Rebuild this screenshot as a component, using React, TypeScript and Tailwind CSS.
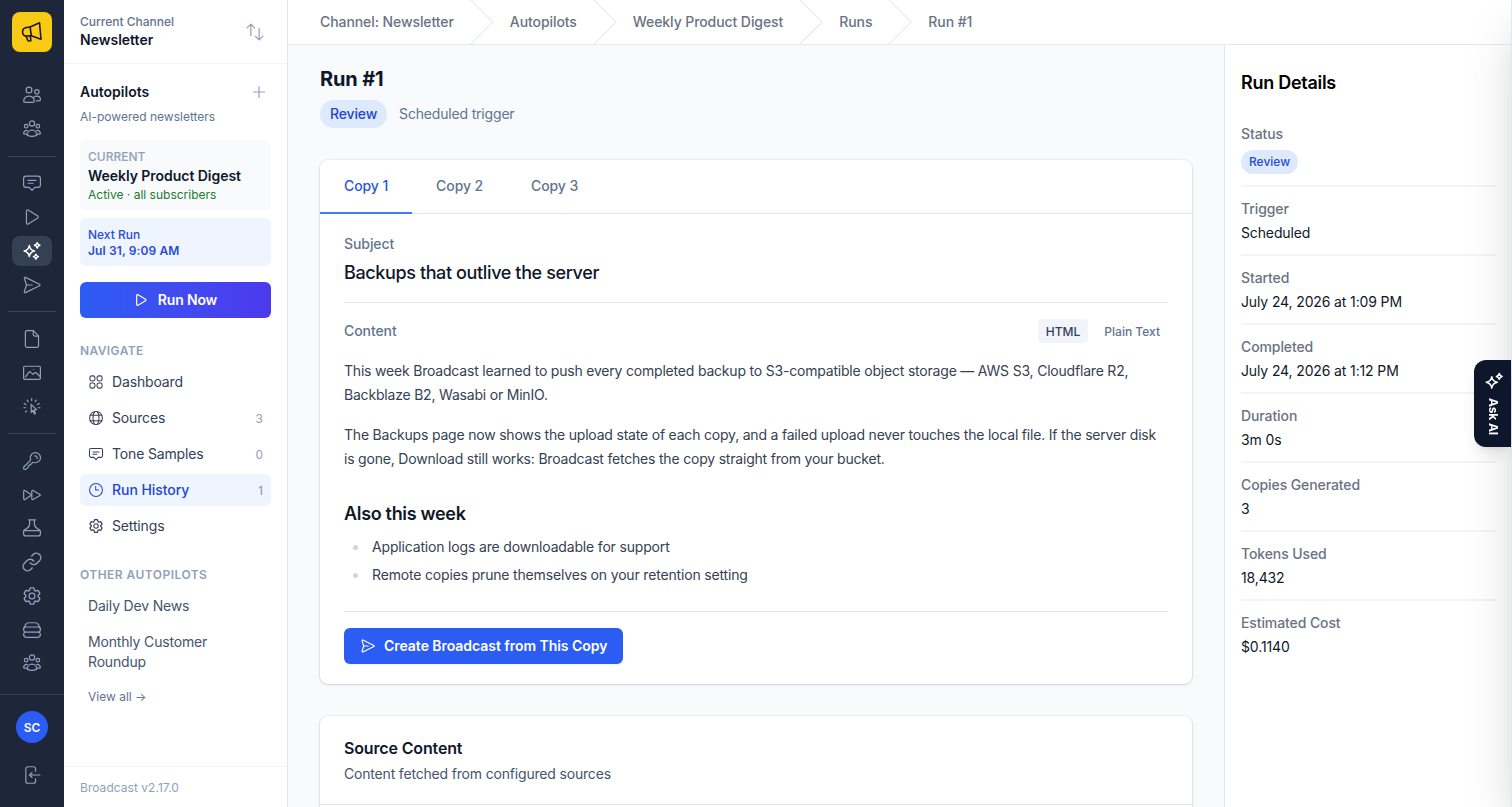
import React from 'react';
import clsx from 'clsx';

const icons = {
  megaphone: (
    <>
      <path d="M9.8 6.1 21 .9l1.8 19.8-11.7-4.3z" />
      <path d="m9.800 6.100-4.500.6C2.200 7.200.5 9.600.7 12.400c.3 3 2.500 4.900 5.400 4.500l5-.5" />
      <path d="m5 17 2 5c.2.6.7.8 1.200.8l2.500-.4-.8-5.700" />
    </>
  ),
  users: (
    <>
      <circle cx="8" cy="5.4" r="3.9" />
      <circle cx="18.5" cy="7.800" r="2.9" />
      <path d="M.9 20.2c0-3.9 3.2-6.8 7.1-6.8s7.1 2.9 7.1 6.8c0 .7-.4 1.200-1 1.300-4 .6-8.200.6-12.200 0-.6-.1-1-.6-1-1.300Z" />
      <path d="M14.4 14.7c1.200-.9 2.600-1.300 4.100-1.300 2.700 0 4.800 2.100 4.800 4.900 0 .6-.4 1.100-.9 1.200-1.500.3-3 .4-4.600.4" />
    </>
  ),
  group: (
    <>
      <circle cx="12" cy="4.6" r="3.5" />
      <circle cx="4.2" cy="8.2" r="2.4" />
      <circle cx="19.8" cy="8.2" r="2.4" />
      <path d="M5.6 20.2c0-3.7 2.8-6.6 6.4-6.6s6.4 2.9 6.4 6.6c-4 2.1-8.800 2.100-12.800 0Z" />
      <path d="M6.200 14.300C3.400 13.200.9 15 .8 18.300c1 .5 2.600.7 4.800.5M17.800 14.300c2.800-1.100 5.300.7 5.400 4-1 .5-2.600.7-4.800.5" />
    </>
  ),
  chat: (
    <>
      <path d="M3.8 2.7h16.4c1.7 0 3 1.3 3 3v9.100c0 1.700-1.300 3-3 3h-4.400L12 21.700l-3.800-3.900H3.800c-1.700 0-3-1.300-3-3V5.700c0-1.700 1.300-3 3-3Z" />
      <path d="M6.700 8.500h10.600M6.700 12.300h6.800" />
    </>
  ),
  play: <path d="M4.6 4.1v15.800c0 1.200 1.300 1.900 2.300 1.300l12.800-7.900c1-.6 1-2 0-2.600L6.900 2.800C5.900 2.200 4.600 2.900 4.600 4.100Z" />,
  sparkles: (
    <>
      <path d="M8.4 4.8c.7 4 2.700 6.300 6.900 7.200-4.200.9-6.200 3.200-6.900 7.200-.7-4-2.700-6.300-6.900-7.200 4.200-.9 6.200-3.200 6.900-7.200Z" />
      <path d="M18.9.9c.4 2 1.500 3 3.600 3.500-2.100.5-3.200 1.600-3.600 3.600-.4-2-1.500-3.100-3.600-3.600 2.100-.5 3.200-1.500 3.600-3.500ZM17.200 16.200c.4 2 1.300 2.900 3.300 3.300-2 .4-2.900 1.400-3.300 3.400-.4-2-1.300-3-3.300-3.400 2-.4 2.900-1.300 3.300-3.300Z" />
    </>
  ),
  stars: (
    <>
      <path d="M9 6.200c.7 4.600 2.700 6.700 7.400 7.600-4.700.9-6.700 3.100-7.400 7.600-.7-4.500-2.700-6.700-7.400-7.600C6.300 12.900 8.300 10.800 9 6.200Z" />
      <path d="M19 2c.4 2.300 1.400 3.400 3.800 3.900-2.400.5-3.400 1.600-3.800 3.900-.4-2.300-1.400-3.400-3.800-3.900C17.600 5.400 18.600 4.300 19 2Z" />
    </>
  ),
  send: (
    <>
      <path d="M3.3 1.800 22 11c.9.400.9 1.600 0 2L3.300 22.200c-.9.400-1.800-.4-1.500-1.300L4.700 12 1.800 3.100c-.3-.9.6-1.700 1.500-1.300Z" />
      <path d="M4.700 12h7.600" />
    </>
  ),
  file: (
    <>
      <path d="M5.200.9h8.600l6.900 7v13.200c0 1.100-.9 2-2 2H5.200c-1.100 0-2-.9-2-2V2.900c0-1.100.9-2 2-2Z" />
      <path d="M13.700.9v5.200c0 1.100.9 2 2 2h5" />
    </>
  ),
  image: (
    <>
      <rect x=".8" y="3" width="22.4" height="17.6" rx="1.6" />
      <path d="m3.300 17.300 4.800-6.600c.4-.5 1.100-.6 1.600-.2l3.600 3.300 2.400-2.200c.5-.4 1.100-.4 1.600 0l5.600 5M14 7.300h.01" />
    </>
  ),
  click: (
    <>
      <path d="m10.900 8.400.1 10.700 2.300-2.400 1.900 4.800M10.900 8.400l7 7.200-3.200.5 1.900 4.700" />
      <path d="M11.500.9v2.400M5.600 2.700l1.300 2.200M17.600 2.700l-1.300 2.200M1.600 7.500l2.400 1.100M21.600 7.500l-2.400 1.100M1.100 13h2.500M22.700 13h-2.500M3.100 18.600l2-1.200" />
    </>
  ),
  key: (
    <>
      <path d="M21.300 2.800c-2.700-2.600-7-2.600-9.600.1-1.800 1.800-2.400 4.400-1.700 6.800.2.600 0 1.200-.4 1.700l-7.900 7.900c-1.200 1.200-1.200 2.700-.4 3.400.8.9 2.300.8 3.400-.3l2.200-2.200c.4-.4.5-.9.5-1.500 0-.7.500-1.200 1.200-1.200.5 0 .9-.2 1.200-.5l2.600-2.600c.5-.4 1.100-.6 1.700-.4 2.500.7 5.300.1 7.300-1.800 2.600-2.600 2.600-6.800-.1-9.400Z" />
      <path d="M15.600 5.300c1.700-.6 4 1.500 3.300 3.500" />
    </>
  ),
  forward: (
    <>
      <path d="M.9 6.900v10.200c0 .9 1 1.400 1.700.9l7.900-5.200c.6-.4.6-1.200 0-1.600L2.600 6C1.900 5.500.9 6 .9 6.900Z" />
      <path d="M11.700 6.900v10.200c0 .9 1 1.400 1.700.9l9.200-5.200c.7-.4.7-1.200 0-1.600L13.400 6c-.7-.5-1.700 0-1.700.9Z" />
    </>
  ),
  flask: (
    <>
      <path d="M7.500 1.100h9M8.800 1.100v5.300c0 2.900-1.700 5.400-4.300 6.700L2 14.500C1.200 15 .8 15.800.8 16.700v2.800c0 1.700 1.400 3.100 3.100 3.100h16.200c1.700 0 3.100-1.400 3.100-3.100v-2.800c0-.9-.5-1.700-1.200-2.200l-2.500-1.400c-2.600-1.300-4.300-3.800-4.300-6.700V1.100" />
      <path d="M1.300 15.400h21.400" />
    </>
  ),
  link: (
    <g transform="translate(-2.200 -2.200) scale(1.180)">
      <path d="M10 13a5 5 0 0 0 7.540.54l3-3a5 5 0 0 0-7.070-7.070l-1.720 1.710" />
      <path d="M14 11a5 5 0 0 0-7.540-.54l-3 3a5 5 0 0 0 7.070 7.070l1.710-1.710" />
    </g>
  ),
  cog: (
    <>
      <path
        transform="translate(-2.400 -2.400) scale(1.200)"
        d="M9.594 3.940c.09-.542.56-.94 1.110-.94h2.593c.55 0 1.020.398 1.110.94l.213 1.281c.063.374.313.686.645.87.074.04.147.083.22.127.325.196.72.257 1.075.124l1.217-.456a1.125 1.125 0 0 1 1.370.49l1.296 2.247a1.125 1.125 0 0 1-.26 1.431l-1.003.827c-.293.241-.438.613-.43.992a7.723 7.723 0 0 1 0 .255c-.008.378.137.75.43.991l1.004.827c.424.35.534.955.26 1.430l-1.298 2.247a1.125 1.125 0 0 1-1.369.491l-1.217-.456c-.355-.133-.75-.072-1.076.124a6.470 6.470 0 0 1-.22.128c-.331.183-.581.495-.644.869l-.213 1.281c-.09.543-.56.94-1.110.94h-2.594c-.55 0-1.019-.398-1.110-.94l-.213-1.281c-.062-.374-.312-.686-.644-.87a6.520 6.520 0 0 1-.22-.127c-.325-.196-.72-.257-1.076-.124l-1.217.456a1.125 1.125 0 0 1-1.369-.49l-1.297-2.247a1.125 1.125 0 0 1 .26-1.431l1.004-.827c.292-.24.437-.613.43-.991a6.932 6.932 0 0 1 0-.255c.007-.38-.138-.751-.43-.992l-1.004-.827a1.125 1.125 0 0 1-.26-1.430l1.297-2.247a1.125 1.125 0 0 1 1.370-.491l1.216.456c.356.133.751.072 1.076-.124.072-.044.146-.086.22-.128.332-.183.582-.495.644-.869l.214-1.280Z"
      />
      <circle cx="12" cy="12" r="3.9" />
    </>
  ),
  server: (
    <>
      <path d="M1.100 9.400 3.900 4.200c.7-1.200 1.800-1.900 3.200-1.900h9.800c1.400 0 2.500.7 3.200 1.900l2.800 5.200" />
      <rect x=".8" y="8" width="22.4" height="6.9" rx="3.3" />
      <path d="M2.500 14.900c-1 .6-1.700 1.600-1.700 2.900 0 2 1.500 3.900 3.600 3.900h15.200c2.100 0 3.600-1.900 3.600-3.900 0-1.300-.7-2.300-1.700-2.900" />
    </>
  ),
  logout: (
    <>
      <path d="M16.700 7V3.700c0-1.500-1.200-2.700-2.700-2.700H6.500C5 1 3.800 2.200 3.800 3.700v16.600C3.800 21.800 5 23 6.500 23H14c1.500 0 2.700-1.200 2.700-2.700V17" />
      <path d="M22.500 12H8.900M12 8.700 8.700 12l3.300 3.300" />
    </>
  ),
  swap: <path d="M6.500 17V1.500M1.500 6.500l5-5 5 5M17.500 7v15.500M12.500 17.500l5 5 5-5" />,
  plus: <path d="M12 1v22M1 12h22" />,
  grid: (
    <>
      <rect x="1.500" y="1.500" width="8.7" height="8.7" rx="3.2" />
      <rect x="13.800" y="1.500" width="8.7" height="8.7" rx="3.2" />
      <rect x="1.500" y="13.800" width="8.7" height="8.7" rx="3.2" />
      <rect x="13.800" y="13.800" width="8.7" height="8.7" rx="3.2" />
    </>
  ),
  globe: (
    <>
      <circle cx="12" cy="12" r="11" />
      <path d="M2.300 7.200h19.400M2.300 16.800h19.400M9.400 1.300c-3.400 7-3.400 14.400 0 21.400M14.600 1.300c3.400 7 3.400 14.400 0 21.400" />
    </>
  ),
  clock: (
    <>
      <circle cx="12" cy="12" r="11" />
      <path d="M11.500 5.500V12h5.200" />
    </>
  )
};

type IconName = keyof typeof icons;

const Icon = ({ name, className }: { name: IconName; className?: string }) => (
  <svg
    viewBox="0 0 24 24"
    fill="none"
    stroke="currentColor"
    strokeWidth={1.6}
    strokeLinecap="round"
    strokeLinejoin="round"
    className={clsx('shrink-0 overflow-visible', className)}
  >
    {icons[name]}
  </svg>
);

const railGroups: IconName[][] = [
  ['users', 'group'],
  ['chat', 'play', 'sparkles', 'send'],
  ['file', 'image', 'click'],
  ['key', 'forward', 'flask', 'link', 'cog', 'server', 'group']
];

const navItems: { icon: IconName; label: string; count?: number }[] = [
  { icon: 'grid', label: 'Dashboard' },
  { icon: 'globe', label: 'Sources', count: 3 },
  { icon: 'chat', label: 'Tone Samples', count: 0 },
  { icon: 'clock', label: 'Run History', count: 1 },
  { icon: 'cog', label: 'Settings' }
];

const crumbs = ['Channel: Newsletter', 'Autopilots', 'Weekly Product Digest', 'Runs', 'Run #1'];

const details = [
  ['Trigger', 'Scheduled'],
  ['Started', 'July 24, 2026 at 1:09 PM'],
  ['Completed', 'July 24, 2026 at 1:12 PM'],
  ['Duration', '3m 0s'],
  ['Copies Generated', '3'],
  ['Tokens Used', '18,432'],
  ['Estimated Cost', '$0.1140']
];

const Rail = () => (
  <aside className="flex w-16 shrink-0 flex-col bg-[#1e273a]">
    <div className="flex h-16 items-center justify-center">
      <div className="flex size-10 items-center justify-center rounded-lg bg-[#f9ca14] text-[#1c1917]">
        <Icon name="megaphone" className="size-5 stroke-[1.9]" />
      </div>
    </div>
    <nav className="flex flex-1 flex-col px-2 pt-[16.5px]">
      {railGroups.map((group, i) => (
        <React.Fragment key={i}>
          {i > 0 && <div className="my-[11.8px] h-px shrink-0 bg-slate-600/70" />}
          <div className="flex flex-col gap-1 px-1">
            {group.map((name, j) => (
              <a
                key={j}
                className={clsx(
                  'flex h-[29.75px] items-center justify-center rounded-lg',
                  name === 'sparkles' ? 'bg-[#344054] text-white' : 'text-slate-400'
                )}
              >
                <Icon name={name} className={clsx('size-[18px]', name === 'sparkles' && 'stroke-2')} />
              </a>
            ))}
          </div>
        </React.Fragment>
      ))}
    </nav>
    <div className="flex h-[113px] flex-col items-center border-t border-slate-700 pt-4">
      <div className="flex size-8 items-center justify-center rounded-full bg-[#2b5cf3] pt-px text-xs font-semibold text-white">
        SC
      </div>
      <Icon name="logout" className="mt-[23px] size-[18px] text-slate-400" />
    </div>
  </aside>
);

const Sidebar = () => (
  <aside className="flex w-56 shrink-0 flex-col border-r border-gray-200 bg-white">
    <div className="flex h-16 items-center justify-between border-b border-gray-100 pr-[23px] pl-4">
      <div>
        <p className="text-xs leading-4 font-medium text-slate-500">Current Channel</p>
        <p className="text-sm leading-5 font-semibold text-slate-900">Newsletter</p>
      </div>
      <Icon name="swap" className="size-[18px] text-slate-400" />
    </div>
    <div className="flex-1 px-4 pt-[18px]">
      <div className="flex items-center justify-between pr-1.5">
        <h2 className="text-sm font-semibold text-slate-900">Autopilots</h2>
        <Icon name="plus" className="size-3 stroke-[2.4] text-slate-400" />
      </div>
      <p className="mt-[7px] text-xs text-slate-500">AI-powered newsletters</p>

      <div className="mt-[15px] rounded-md bg-slate-50 px-2 pt-[9px] pb-[7px]">
        <p className="text-xs font-medium text-slate-400">CURRENT</p>
        <p className="mt-px text-sm font-semibold tracking-[-0.04px] text-slate-900">Weekly Product Digest</p>
        <p className="mt-px text-xs text-[#217a2f]">Active · all subscribers</p>
      </div>
      <div className="mt-2 rounded-md bg-[#eff5fe] px-2 pt-[9px] pb-[7px] text-xs text-[#2a4bd7]">
        <p className="font-medium">Next Run</p>
        <p className="font-semibold tracking-[0.12px]">Jul 31, 9:09 AM</p>
      </div>
      <button className="mt-4 flex h-9 w-full items-center justify-center gap-2.5 rounded-md bg-linear-to-r from-[#2b5cf3] to-[#4c38ee] text-sm font-semibold tracking-[-0.15px] text-white">
        <Icon name="play" className="size-3.5 stroke-2" />
        Run Now
      </button>

      <h3 className="mt-[25px] text-xs font-semibold tracking-[0.4px] text-slate-400">NAVIGATE</h3>
      <ul className="mt-[7px] space-y-1 tracking-[-0.15px]">
        {navItems.map(({ icon, label, count }) => (
          <li
            key={label}
            className={clsx(
              'flex h-8 items-center rounded-md px-2 text-sm',
              label === 'Run History' ? 'bg-[#eff5fe] font-medium tracking-[-0.05px] text-[#2346cf]' : 'text-slate-700'
            )}
          >
            <Icon name={icon} className="mr-[9px] ml-px size-3.5 stroke-[1.8]" />
            {label}
            {count !== undefined && <span className="ml-auto pt-px text-xs tracking-normal text-slate-400">{count}</span>}
          </li>
        ))}
      </ul>

      <h3 className="mt-[25px] text-xs font-semibold tracking-[0.46px] text-slate-400">OTHER AUTOPILOTS</h3>
      <ul className="mt-[7px] space-y-1 text-slate-600">
        <li className="px-2 py-1.5 text-sm tracking-[-0.17px]">Daily Dev News</li>
        <li className="px-2 py-1.5 text-sm tracking-[-0.17px]">Monthly Customer Roundup</li>
        <li className="px-2 pt-[7px] text-xs text-slate-500">View all →</li>
      </ul>
    </div>
    <div className="h-[41px] border-t border-gray-100 px-4 pt-[13px] text-xs tracking-[0.04px] text-slate-400">
      Broadcast v2.17.0
    </div>
  </aside>
);

const CopyCard = () => (
  <section className="mt-8 rounded-lg bg-white shadow-sm ring-1 ring-gray-900/5">
    <div className="flex border-b border-gray-200 text-sm font-medium tracking-[-0.1px] text-slate-500">
      <a className="-mb-px border-b-2 border-[#3f7df8] px-6 py-4 text-[#2b55e0]">Copy 1</a>
      <a className="-mb-px border-b-2 border-transparent px-6 py-4">Copy 2</a>
      <a className="-mb-px border-b-2 border-transparent px-6 py-4">Copy 3</a>
    </div>
    <div className="px-6 py-5">
      <p className="text-sm font-medium tracking-[-0.08px] text-slate-500">Subject</p>
      <p className="mt-[5px] text-lg leading-7 font-medium tracking-[-0.38px] text-slate-900">
        Backups that outlive the server
      </p>

      <div className="mt-[15px] flex items-center justify-between border-t border-gray-200 pt-4">
        <p className="text-sm font-medium tracking-[-0.08px] text-slate-500">Content</p>
        <div className="flex gap-2 text-xs font-medium">
          <span className="rounded bg-slate-100 px-2 pt-[5px] pb-[3px] text-slate-700">HTML</span>
          <span className="px-2 pt-[5px] pb-[3px] text-slate-500">Plain Text</span>
        </div>
      </div>

      <div className="mt-4 text-sm leading-6 text-gray-700">
        <p className="tracking-[-0.2px]">
          This week Broadcast learned to push every completed backup to S3-compatible object storage — AWS S3,
          Cloudflare R2, Backblaze B2, Wasabi or MinIO.
        </p>
        <p className="mt-4 tracking-[-0.2px]">
          The Backups page now shows the upload state of each copy, and a failed upload never touches the local file.
          If the server disk is gone, Download still works: Broadcast fetches the copy straight from your bucket.
        </p>
        <h3 className="mt-[29px] text-lg leading-7 font-semibold tracking-[-0.32px] text-gray-900">Also this week</h3>
        <ul className="mt-[7px] space-y-1 tracking-[-0.17px]">
          {['Application logs are downloadable for support', 'Remote copies prune themselves on your retention setting'].map((item) => (
            <li key={item} className="flex items-center">
              <span className="mr-3.5 ml-[9px] size-[5px] rounded-full bg-gray-300" />
              {item}
            </li>
          ))}
        </ul>
      </div>

      <div className="mt-6 border-t border-gray-200 pt-4">
        <button className="flex h-9 items-center gap-2 rounded-md bg-[#2b5cf3] px-4 text-sm font-semibold tracking-[-0.04px] text-white shadow-xs">
          <Icon name="send" className="mx-px size-3.5 stroke-2" />
          Create Broadcast from This Copy
        </button>
      </div>
    </div>
  </section>
);

const RunDetails = () => (
  <aside className="w-72 shrink-0 border-l border-gray-200 bg-white px-4 pt-6 text-sm">
    <h2 className="mb-[27px] text-lg leading-7 font-semibold tracking-[-0.28px] text-black">Run Details</h2>
    <dl className="divide-y-2 divide-gray-100">
      <div className="pb-[11.5px]">
        <dt className="font-medium tracking-[-0.1px] text-gray-500">Status</dt>
        <dd className="mt-[5.5px] flex">
          <span className="rounded-full bg-[#dde9fc] px-2 py-1 text-xs font-medium text-[#2a4bd7]">Review</span>
        </dd>
      </div>
      {details.map(([label, value]) => (
        <div key={label} className="pt-3 pb-[11px]">
          <dt className="font-medium tracking-[-0.1px] text-gray-500">{label}</dt>
          <dd className="mt-1 tracking-[-0.13px] text-gray-900">{value}</dd>
        </div>
      ))}
    </dl>
  </aside>
);

const App = () => {
  return (
    <div className="flex h-screen overflow-hidden bg-slate-50 font-['Inter',sans-serif]">
      <Rail />
      <Sidebar />
      <div className="flex min-w-0 flex-1 flex-col">
        <nav className="flex h-[45px] shrink-0 gap-4 border-b border-gray-200 bg-white pl-8">
          {crumbs.map((crumb, i) => (
            <React.Fragment key={crumb}>
              {i > 0 && (
                <svg viewBox="0 0 24 44" preserveAspectRatio="none" className="h-full w-6 shrink-0 fill-gray-200">
                  <path d="M.293 0l22 22-22 22h1.414l22-22-22-22H.293z" />
                </svg>
              )}
              <span className="self-center text-sm font-medium tracking-[-0.08px] text-gray-500">{crumb}</span>
            </React.Fragment>
          ))}
        </nav>
        <div className="flex min-h-0 flex-1">
          <main className="min-w-0 flex-1 overflow-hidden px-8 pt-5">
            <h1 className="text-xl leading-7 font-bold tracking-[-0.15px] text-slate-900">Run #1</h1>
            <div className="mt-[7px] flex items-center gap-3 text-sm">
              <span className="rounded-full bg-[#dde9fc] px-2.5 py-1 font-medium tracking-[-0.15px] text-[#2346cf]">
                Review
              </span>
              <span className="tracking-[-0.18px] text-slate-500">Scheduled trigger</span>
            </div>
            <CopyCard />
            <section className="mt-8 rounded-lg bg-white shadow-sm ring-1 ring-gray-900/5">
              <div className="border-b border-gray-200 px-6 py-5">
                <h2 className="text-base font-semibold tracking-[-0.15px] text-slate-900">Source Content</h2>
                <p className="mt-1 text-sm tracking-[-0.18px] text-slate-600">Content fetched from configured sources</p>
              </div>
              <div className="h-40" />
            </section>
          </main>
          <RunDetails />
        </div>
      </div>

      {/* Closed assistant drawer, only its edge and tab are visible */}
      <div className="fixed inset-y-0 left-[calc(100%-1px)] w-96 border-l border-slate-200 bg-white shadow-2xl" />
      <button className="fixed top-[360px] right-px flex h-[87px] w-[37px] flex-col items-center gap-2 rounded-l-xl bg-[#0e162b] pt-3 text-white shadow-lg">
        <Icon name="stars" className="ml-0.5 size-[18px] stroke-2" />
        <span className="text-xs leading-4 font-bold tracking-[-0.1px] [writing-mode:vertical-rl]">Ask AI</span>
      </button>
    </div>
  );
};

export default App;
